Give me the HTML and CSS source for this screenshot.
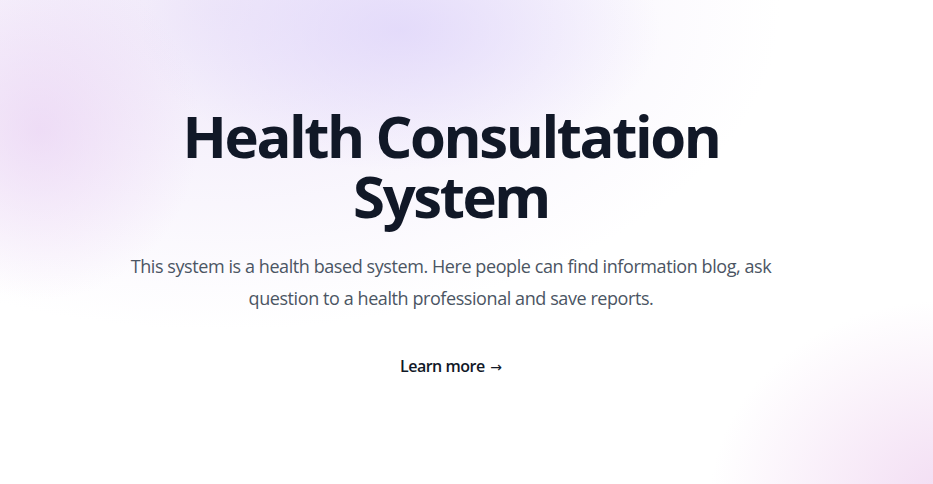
FILE: index.html
```html
<!DOCTYPE html>
<html lang="en">
<head>
<meta charset="utf-8">
<title>Health Consultation System</title>
<link rel="stylesheet" href="styles.css">
</head>
<body>
<main class="hero">
  <div class="hero-inner">
    <h1 class="title">Health Consultation System</h1>
    <p class="lead">This system is a health based system. Here people can find information blog, ask question to a health professional and save reports.</p>
    <div class="actions">
      <a class="more" href="#">Learn more <span class="arrow" aria-hidden="true">→</span></a>
    </div>
  </div>
</main>
</body>
</html>
```
FILE: styles.css
```css
html, body {
  margin: 0;
  padding: 0;
}
body {
  width: 933px;
  height: 484px;
  overflow: hidden;
  font-family: "Open Sans", "Noto Sans", sans-serif;
  background:
    radial-gradient(ellipse 160px 170px at 40px 130px, rgba(232, 205, 242, 0.6), rgba(232, 205, 242, 0) 100%),
    radial-gradient(ellipse 260px 140px at 400px 30px, rgba(222, 212, 250, 0.75), rgba(222, 212, 250, 0) 100%),
    radial-gradient(ellipse 560px 320px at 220px 10px, rgba(238, 230, 249, 0.9), rgba(238, 230, 249, 0) 100%),
    radial-gradient(ellipse 240px 200px at 950px 500px, rgba(242, 220, 243, 1), rgba(242, 220, 243, 0) 100%),
    #ffffff;
}
.hero {
  display: flex;
  justify-content: center;
  padding: 106px 31px 0 0;
}
.hero-inner {
  width: 672px;
  text-align: center;
}
.title {
  margin: 0;
  font-size: 58px;
  line-height: 60px;
  font-weight: 700;
  letter-spacing: -2.4px;
  color: #111827;
}
.lead {
  margin: 24px 0 0;
  font-size: 18px;
  line-height: 32px;
  letter-spacing: -0.42px;
  color: #4b5563;
}
.actions {
  margin-top: 40px;
  display: flex;
  justify-content: center;
}
.more {
  font-size: 16px;
  line-height: 24px;
  font-weight: 600;
  letter-spacing: -0.5px;
  color: #111827;
  text-decoration: none;
}
.arrow {
  font-family: "DejaVu Sans", sans-serif;
  font-weight: 400;
  font-size: 14px;
  letter-spacing: 0;
  margin-left: 2px;
}
```
